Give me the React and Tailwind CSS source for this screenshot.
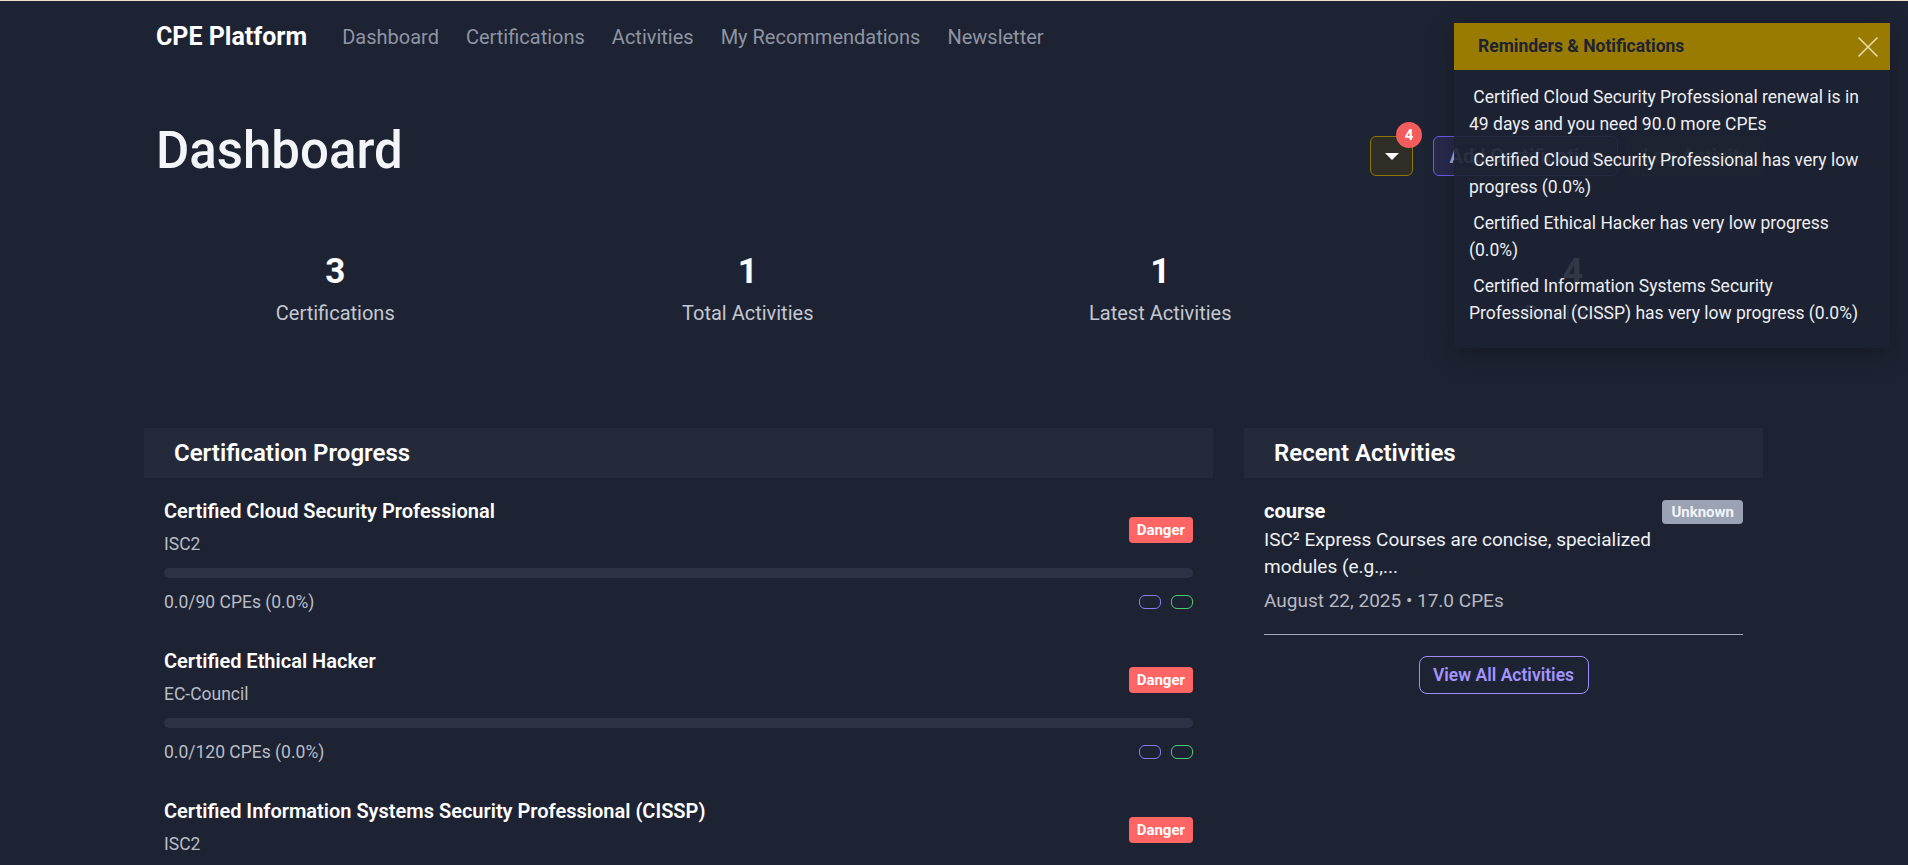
import React from 'react';

const certs = [
  { name: 'Certified Cloud Security Professional', org: 'ISC2', cpe: '0.0/90 CPEs (0.0%)' },
  { name: 'Certified Ethical Hacker', org: 'EC-Council', cpe: '0.0/120 CPEs (0.0%)' },
  { name: 'Certified Information Systems Security Professional (CISSP)', org: 'ISC2', cpe: '0.0/100 CPEs (0.0%)' },
];

const stats = [
  { value: '3', label: 'Certifications' },
  { value: '1', label: 'Total Activities' },
  { value: '1', label: 'Latest Activities' },
  { value: '4', label: 'Reminders' },
];

const reminders = [
  ['Certified Cloud Security Professional renewal is in', '49 days and you need 90.0 more CPEs'],
  ['Certified Cloud Security Professional has very low', 'progress (0.0%)'],
  ['Certified Ethical Hacker has very low progress', '(0.0%)'],
  ['Certified Information Systems Security', 'Professional (CISSP) has very low progress (0.0%)'],
];

function Navbar() {
  return (
    <nav className="h-[72px] flex items-center px-3">
      <span className="text-[25px] font-bold text-white mr-[35px]">CPE Platform</span>
      <div className="flex gap-[27px] text-[20px] text-[#8f95a3]">
        <a>Dashboard</a>
        <a>Certifications</a>
        <a>Activities</a>
        <a>My Recommendations</a>
        <a>Newsletter</a>
      </div>
    </nav>
  );
}

function CertItem({ c }) {
  return (
    <div className="mb-[31px]">
      <div className="flex justify-between items-start">
        <div>
          <div className="text-[20px] leading-[30px] font-semibold text-white">{c.name}</div>
          <div className="mt-[5px] text-[17.5px] leading-[26px] text-[#b9bdc7]">{c.org}</div>
        </div>
        <span className="mt-[21px] h-[26px] px-[8px] flex items-center rounded-[4px] bg-[#ff6565] text-white text-[15px] font-bold">Danger</span>
      </div>
      <div className="mt-[11px] h-[10px] rounded-full bg-[#2c3144]" />
      <div className="mt-[11px] flex justify-between items-center">
        <span className="text-[17.5px] leading-[26px] text-[#b9bdc7]">{c.cpe}</span>
        <div className="flex gap-[10px]">
          <span className="w-[22px] h-[14px] rounded-[6px] border border-[#8b7cf6]" />
          <span className="w-[22px] h-[14px] rounded-[6px] border border-[#4fc978]" />
        </div>
      </div>
    </div>
  );
}

export default function App() {
  return (
    <div className="h-screen bg-[#1e2333] border-t border-[#f3dfcf] text-white overflow-hidden relative" style={{ fontFamily: 'Roboto, "Noto Sans", sans-serif' }}>
      <div className="w-[1620px] mx-auto">
        <Navbar />

        <div className="mt-[48px] flex justify-between items-center pl-3">
          <h1 className="text-[51px] leading-[60px] font-medium text-[#f4f5f8]">Dashboard</h1>
          <div className="flex items-center mt-[10px]">
            <div className="relative">
              <button className="w-[43px] h-[40px] rounded-[6px] border border-[#8c7705] bg-[#2e2e27] flex items-center justify-center">
                <span className="w-0 h-0 border-l-[7px] border-r-[7px] border-t-[7px] border-l-transparent border-r-transparent border-t-white" />
              </button>
              <span className="absolute -top-[14px] -right-[9px] w-[26px] h-[26px] rounded-full bg-[#f25c5c] text-white text-[15px] font-bold flex items-center justify-center">4</span>
            </div>
            <button className="ml-[20px] w-[185px] h-[40px] rounded-[6px] border border-[#6b5cf0] bg-[#29294d] text-[20px] font-semibold text-[#a9a9d6]">Add Certification</button>
            <button className="ml-[10px] w-[136px] h-[40px] rounded-[6px] border border-[#2e4a3c] bg-[#1f2b2e] text-[20px] font-semibold text-[#6f8a7c]">Log Activity</button>
          </div>
        </div>

        <div className="mt-[70px] -mx-[15px] w-[1650px] grid grid-cols-4 text-center">
          {stats.map((s) => (
            <div key={s.label}>
              <div className="text-[35px] leading-[42px] font-bold text-white">{s.value}</div>
              <div className="mt-[5px] text-[20px] leading-[30px] text-[#c3c7d0]">{s.label}</div>
            </div>
          ))}
        </div>

        <div className="mt-[100px] flex gap-[31px] items-start">
          <div className="w-[1069px]">
            <div className="h-[50px] bg-[#252a3b] flex items-center px-[30px]">
              <h5 className="text-[24px] font-semibold text-white">Certification Progress</h5>
            </div>
            <div className="px-[20px] pt-[18px]">
              {certs.map((c) => <CertItem key={c.name} c={c} />)}
            </div>
          </div>

          <div className="w-[519px]">
            <div className="h-[50px] bg-[#252a3b] flex items-center px-[30px]">
              <h5 className="text-[24px] font-semibold text-white">Recent Activities</h5>
            </div>
            <div className="px-[20px] pt-[18px] pb-[20px]">
              <div className="flex justify-between items-start">
                <div>
                  <div className="text-[20px] leading-[30px] font-bold text-white">course</div>
                  <div className="text-[19px] leading-[27px] text-[#eef0f4] whitespace-nowrap">
                    ISC² Express Courses are concise, specialized<br />modules (e.g.,...
                  </div>
                  <div className="mt-[7px] text-[19px] leading-[27px] text-[#b6bac4]">August 22, 2025 • 17.0 CPEs</div>
                </div>
                <span className="mt-[4px] h-[24px] px-[9px] flex items-center rounded-[4px] bg-[#9aa2b3] text-[#f3f4f7] text-[15px] font-bold">Unknown</span>
              </div>
              <div className="mt-[20px] h-px bg-[#a3a9b8]" />
              <div className="mt-[21px] flex justify-center">
                <button className="w-[170px] h-[38px] rounded-[8px] border border-[#9d8cf9] text-[17.5px] font-semibold text-[#a394ff]">View All Activities</button>
              </div>
            </div>
          </div>
        </div>
      </div>

      <div className="absolute top-[22px] left-[1454px] w-[436px] shadow-[0_8px_24px_rgba(0,0,0,0.25)]">
        <div className="h-[47px] bg-[#987b00] flex items-center justify-between pl-[24px] pr-[11px]">
          <span className="text-[17.5px] font-bold text-[#1e2333]">Reminders &amp; Notifications</span>
          <svg width="22" height="22" viewBox="0 0 22 22" fill="none" stroke="#e6dcae" strokeWidth="1.6" strokeLinecap="round">
            <path d="M2 2 L20 20 M20 2 L2 20" />
          </svg>
        </div>
        <div className="bg-[#1d2232]/90 pl-[15px] pr-[20px] pt-[14px] pb-[22px] flex flex-col gap-[10px]">
          {reminders.map((r) => (
            <div key={r[0]} className="text-[17.5px] leading-[26.5px] text-[#eceef2] whitespace-nowrap">
              &nbsp;{r[0]}<br />{r[1]}
            </div>
          ))}
        </div>
      </div>
    </div>
  );
}
